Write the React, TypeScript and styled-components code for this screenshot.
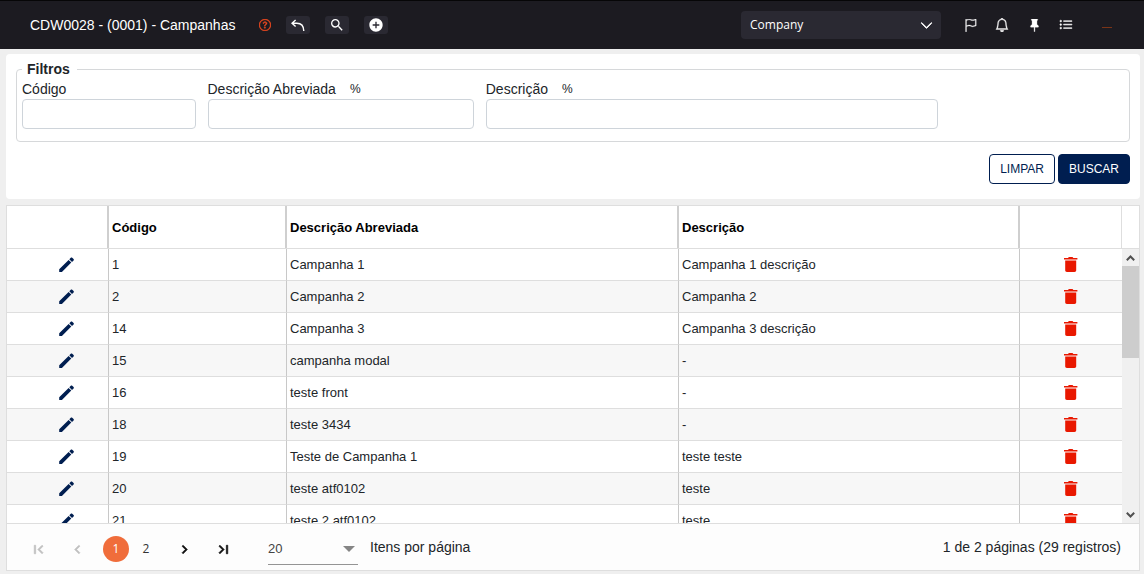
import React from "react";
import styled, { createGlobalStyle } from "styled-components";
import { BsQuestionCircle, BsFlag, BsBell, BsListUl, BsChevronDown, BsPinFill } from "react-icons/bs";
import { MdAddCircle, MdSearch, MdFirstPage, MdLastPage, MdChevronLeft, MdChevronRight } from "react-icons/md";

const GlobalStyle = createGlobalStyle`
  *, *::before, *::after { box-sizing: border-box; }
  body {
    margin: 0;
    background: #efefef;
    color: #212529;
    font-family: "Liberation Sans", Arial, sans-serif;
    font-size: 14px;
    line-height: 20px;
  }
  button, input, select { font: inherit; color: inherit; margin: 0; }
  button { cursor: pointer; }
`;

const TopBar = styled.header`
  display: flex;
  align-items: center;
  height: 49px;
  padding: 0 30px;
  background: #1c1b21;
  border-top: 1px solid #060607;
  color: #fff;
`;

const ScreenTitle = styled.h1`
  margin: 0 20px 0 0;
  font-size: 14px;
  font-weight: 400;
  white-space: nowrap;
`;

const BarActions = styled.div`
  display: flex;
  align-items: center;
  gap: 15px;
`;

const HelpLink = styled.a`
  display: flex;
  padding: 0 4px;
  margin-right: -4px;
  color: #f04a20;
`;

const BarButton = styled.button`
  display: flex;
  align-items: center;
  justify-content: center;
  width: 24px;
  height: 18px;
  padding: 0;
  border: 0;
  border-radius: 3px;
  background: #2a2932;
  color: #fff;
`;

const CompanyField = styled.div`
  display: grid;
  width: 200px;
  margin-left: auto;
  align-items: center;

  & > * { grid-area: 1 / 1; }
  & > svg { justify-self: end; margin-right: 8px; pointer-events: none; }
`;

const CompanySelect = styled.select`
  appearance: none;
  width: 100%;
  height: 28px;
  padding: 0 9px;
  border: 0;
  border-radius: 4px;
  background: #2a2932;
  color: #fff;
  font-family: "Open Sans", "Noto Sans", sans-serif;
  font-size: 12px;
`;

const Shortcuts = styled.nav`
  display: flex;
  align-items: center;
  gap: 18px;
  margin-left: 22px;
`;

const ShortcutButton = styled.button`
  display: flex;
  align-items: center;
  justify-content: center;
  width: 14px;
  height: 20px;
  padding: 0;
  border: 0;
  background: none;
  color: #fff;
`;

const UserMark = styled.span`
  width: 10px;
  height: 1px;
  margin: 4px 2px 0 11px;
  background: #7a3417;
`;

const Content = styled.main`
  display: flex;
  flex-direction: column;
  gap: 6px;
  padding: 5px 4px 3px 6px;
`;

const FilterPanel = styled.form`
  padding: 5px 10px 15px;
  border-radius: 4px;
  background: #fff;
`;

const FilterGroup = styled.fieldset`
  min-width: 0;
  margin: 0;
  padding: 0 6px 12px 5px;
  border: 1px solid #d6d8da;
  border-radius: 4px;
`;

const GroupTitle = styled.legend`
  padding: 0 7px 0 5px;
  font-weight: 700;
`;

const FilterFields = styled.div`
  display: grid;
  grid-template-columns: repeat(12, minmax(0, 1fr));
  column-gap: 12px;
`;

const Field = styled.div<{ $span: number }>`
  grid-column: span ${(p) => p.$span};
`;

const FieldLabel = styled.label`
  display: flex;
  gap: 14px;
  white-space: nowrap;
`;

const Wildcard = styled.span`
  font-size: 12px;
`;

const TextInput = styled.input`
  display: block;
  width: 100%;
  height: 30px;
  padding: 4px 8px;
  border: 1px solid #ced4da;
  border-radius: 4px;
  background: #fff;
`;

const FormActions = styled.div`
  display: flex;
  justify-content: flex-end;
  gap: 3px;
  margin-top: 12px;
`;

const ActionButton = styled.button<{ $primary?: boolean }>`
  height: 30px;
  padding: 0 10px;
  border: 1px solid #001e50;
  border-radius: 4px;
  background: ${(p) => (p.$primary ? "#001e50" : "#fff")};
  color: ${(p) => (p.$primary ? "#fff" : "#001e50")};
  font-size: 12px;
`;

const Grid = styled.section`
  border: 1px solid #dedede;
  background: #fff;
`;

const GridHead = styled.div`
  padding-right: 17px;
  border-bottom: 1px solid #dedede;
`;

const GridViewport = styled.div`
  display: flex;
  height: 274px;
`;

const GridScroll = styled.div`
  flex: 1;
  min-width: 0;
  overflow: hidden;
`;

const Table = styled.table`
  width: 100%;
  table-layout: fixed;
  border-collapse: separate;
  border-spacing: 0;
  font-size: 13px;
`;

const HeadCell = styled.th`
  height: 42px;
  padding: 2px 3px 0;
  border-right: 2px solid #cfcfcf;
  color: #000;
  text-align: left;

  &:last-child { border-right: 1px solid #dedede; }
`;

const Row = styled.tr`
  &:nth-child(even) { background: #f7f7f7; }
`;

const Cell = styled.td<{ $align?: string }>`
  height: 32px;
  padding: 0 3px;
  border-right: 1px solid #c8c8c8;
  border-bottom: 1px solid #dedede;
  text-align: ${(p) => p.$align ?? "left"};
  white-space: nowrap;

  &:last-child { border-right: 0; }
`;

const RowButton = styled.button<{ $danger?: boolean }>`
  padding: 0;
  border: 0;
  margin-left: ${(p) => (p.$danger ? 0 : 18)}px;
  background: none;
  color: ${(p) => (p.$danger ? "#e91800" : "#001e50")};
  vertical-align: middle;

  svg { display: block; }
`;

const ScrollTrack = styled.div`
  display: flex;
  flex-direction: column;
  width: 17px;
  background: #f0f0f0;
`;

const ScrollButton = styled.button`
  display: flex;
  align-items: center;
  justify-content: center;
  height: 17px;
  padding: 0;
  border: 0;
  background: none;
  color: #505050;
`;

const ScrollThumb = styled.div`
  height: 92px;
  margin-bottom: auto;
  background: #cdcdcd;
`;

const Pager = styled.footer`
  display: flex;
  align-items: center;
  height: 47px;
  padding: 0 18px;
  border-top: 1px solid #dedede;
  background: #fdfdfd;
`;

const PageNav = styled.nav`
  display: flex;
  align-items: center;
  margin-top: 4px;
`;

const PageStep = styled.button`
  display: flex;
  align-items: center;
  justify-content: center;
  width: 27px;
  height: 26px;
  margin-right: 12px;
  padding: 0;
  border: 0;
  background: none;
  color: #111;

  path:not([fill="none"]) { stroke-width: 1; }
  &:disabled { color: #c0c0c0; }
`;

const PageNumber = styled.button<{ $current?: boolean }>`
  width: 26px;
  height: 26px;
  margin-right: ${(p) => (p.$current ? 4 : 12)}px;
  padding: 0;
  border: 0;
  border-radius: 50%;
  background: ${(p) => (p.$current ? "#f06d3b" : "none")};
  color: ${(p) => (p.$current ? "#fff" : "#333")};
  font-family: "Open Sans", "Noto Sans", sans-serif;
  font-size: 12px;
`;

const SizeField = styled.div`
  display: grid;
  width: 90px;
  margin: 4px 12px 0 19px;
  align-items: center;

  & > * { grid-area: 1 / 1; }
  & > svg { justify-self: end; margin-right: 3px; pointer-events: none; }
`;

const SizeSelect = styled.select`
  appearance: none;
  width: 100%;
  height: 32px;
  padding: 0;
  border: 0;
  border-bottom: 1px solid #949494;
  border-radius: 0;
  background: none;
  color: #444;
  font-size: 13px;
`;

const PageInfo = styled.span`
  margin-left: auto;
`;

const campaigns = [
  { code: 1, short: "Campanha 1", description: "Campanha 1 descrição" },
  { code: 2, short: "Campanha 2", description: "Campanha 2" },
  { code: 14, short: "Campanha 3", description: "Campanha 3 descrição" },
  { code: 15, short: "campanha modal", description: "-" },
  { code: 16, short: "teste front", description: "-" },
  { code: 18, short: "teste 3434", description: "-" },
  { code: 19, short: "Teste de Campanha 1", description: "teste teste" },
  { code: 20, short: "teste atf0102", description: "teste" },
  { code: 21, short: "teste 2 atf0102", description: "teste" },
];

const Columns = () => (
  <colgroup>
    <col style={{ width: 102 }} />
    <col style={{ width: 178 }} />
    <col style={{ width: 392 }} />
    <col />
    <col style={{ width: 102 }} />
  </colgroup>
);

const UndoIcon = () => (
  <svg width="14" height="13" viewBox="0 0 14 13" fill="none" stroke="currentColor" strokeWidth="1.4">
    <path d="M4.6 1 1 4.2l3.6 3.4M1.2 4.2h4.6c4.4 0 6.9 2.6 7 7.8" />
  </svg>
);

const PencilIcon = () => (
  <svg width="16" height="16" viewBox="0 0 16 16" fill="currentColor">
    <path d="M.2 14.9v-2.6L9.6 2.9l2.7 2.7-9.4 9.3zM10.3 2.2 11.8.7c.4-.4 1-.4 1.4 0L14.6 2c.4.4.4 1 0 1.4L13 4.9z" />
  </svg>
);

const TrashIcon = () => (
  <svg width="14" height="16" viewBox="0 0 14 16" fill="currentColor">
    <path d="M0 1h4L4.9 0h3.6l.9 1h4v1.4H0zM1.2 3.5h11v9.8c0 1-.7 1.7-1.7 1.7H2.9c-1 0-1.7-.7-1.7-1.7z" />
  </svg>
);

const ScrollArrow = ({ down }: { down?: boolean }) => (
  <svg width="9" height="6" viewBox="0 0 9 6" fill="none" stroke="currentColor" strokeWidth="2">
    <path d={down ? "M.8 .8 4.5 4.5 8.2 .8" : "M.8 5.2 4.5 1.5 8.2 5.2"} />
  </svg>
);

export default function App() {
  return (
    <>
      <GlobalStyle />
      <TopBar>
        <ScreenTitle>CDW0028 - (0001) - Campanhas</ScreenTitle>
        <BarActions>
          <HelpLink href="#ajuda" aria-label="Ajuda"><BsQuestionCircle size={12} strokeWidth={0.6} /></HelpLink>
          <BarButton aria-label="Voltar"><UndoIcon /></BarButton>
          <BarButton aria-label="Pesquisar"><MdSearch size={16} /></BarButton>
          <BarButton aria-label="Adicionar"><MdAddCircle size={16} /></BarButton>
        </BarActions>
        <CompanyField>
          <CompanySelect aria-label="Empresa" defaultValue="Company">
            <option>Company</option>
          </CompanySelect>
          <BsChevronDown size={13} strokeWidth={1} />
        </CompanyField>
        <Shortcuts aria-label="Atalhos">
          <ShortcutButton aria-label="Marcadores"><BsFlag size={13} strokeWidth={0.4} /></ShortcutButton>
          <ShortcutButton aria-label="Notificações"><BsBell size={14} strokeWidth={0.4} /></ShortcutButton>
          <ShortcutButton aria-label="Fixar"><BsPinFill size={13} strokeWidth={0.4} /></ShortcutButton>
          <ShortcutButton aria-label="Menu"><BsListUl size={16} strokeWidth={0.6} /></ShortcutButton>
          <UserMark />
        </Shortcuts>
      </TopBar>

      <Content>
        <FilterPanel onSubmit={(e) => e.preventDefault()}>
          <FilterGroup>
            <GroupTitle>Filtros</GroupTitle>
            <FilterFields>
              <Field $span={2}>
                <FieldLabel htmlFor="code">Código</FieldLabel>
                <TextInput id="code" />
              </Field>
              <Field $span={3}>
                <FieldLabel htmlFor="short">Descrição Abreviada <Wildcard>%</Wildcard></FieldLabel>
                <TextInput id="short" />
              </Field>
              <Field $span={5}>
                <FieldLabel htmlFor="description">Descrição <Wildcard>%</Wildcard></FieldLabel>
                <TextInput id="description" />
              </Field>
            </FilterFields>
          </FilterGroup>
          <FormActions>
            <ActionButton type="reset">LIMPAR</ActionButton>
            <ActionButton type="submit" $primary>BUSCAR</ActionButton>
          </FormActions>
        </FilterPanel>

        <Grid aria-label="Campanhas">
          <GridHead>
            <Table>
              <Columns />
              <thead>
                <tr>
                  <HeadCell aria-label="Editar" />
                  <HeadCell>Código</HeadCell>
                  <HeadCell>Descrição Abreviada</HeadCell>
                  <HeadCell>Descrição</HeadCell>
                  <HeadCell aria-label="Excluir" />
                </tr>
              </thead>
            </Table>
          </GridHead>
          <GridViewport>
            <GridScroll>
              <Table>
                <Columns />
                <tbody>
                  {campaigns.map((c) => (
                    <Row key={c.code}>
                      <Cell $align="center">
                        <RowButton aria-label={`Editar ${c.short}`}><PencilIcon /></RowButton>
                      </Cell>
                      <Cell>{c.code}</Cell>
                      <Cell>{c.short}</Cell>
                      <Cell>{c.description}</Cell>
                      <Cell $align="center">
                        <RowButton $danger aria-label={`Excluir ${c.short}`}><TrashIcon /></RowButton>
                      </Cell>
                    </Row>
                  ))}
                </tbody>
              </Table>
            </GridScroll>
            <ScrollTrack>
              <ScrollButton aria-label="Rolar para cima"><ScrollArrow /></ScrollButton>
              <ScrollThumb />
              <ScrollButton aria-label="Rolar para baixo"><ScrollArrow down /></ScrollButton>
            </ScrollTrack>
          </GridViewport>
          <Pager>
            <PageNav aria-label="Paginação">
              <PageStep disabled aria-label="Primeira página"><MdFirstPage size={17} /></PageStep>
              <PageStep disabled aria-label="Página anterior"><MdChevronLeft size={17} /></PageStep>
              <PageNumber $current aria-current="page">1</PageNumber>
              <PageNumber>2</PageNumber>
              <PageStep aria-label="Próxima página"><MdChevronRight size={17} /></PageStep>
              <PageStep aria-label="Última página"><MdLastPage size={17} /></PageStep>
            </PageNav>
            <SizeField>
              <SizeSelect id="page-size" defaultValue="20">
                <option>20</option>
              </SizeSelect>
              <svg width="12" height="6" viewBox="0 0 12 6"><path d="M0 0h12L6 6z" fill="#858585" /></svg>
            </SizeField>
            <label htmlFor="page-size">Itens por página</label>
            <PageInfo>1 de 2 páginas (29 registros)</PageInfo>
          </Pager>
        </Grid>
      </Content>
    </>
  );
}
